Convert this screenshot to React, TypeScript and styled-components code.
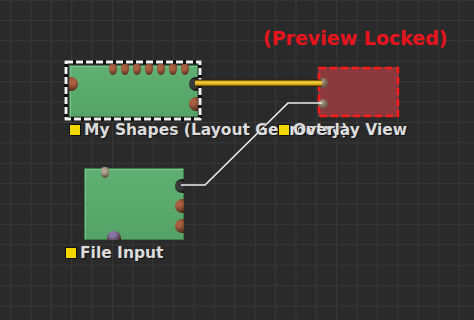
import React from "react";
import styled, { createGlobalStyle, css } from "styled-components";

const GlobalStyle = createGlobalStyle`
	html, body {
		margin: 0;
		padding: 0;
		background: #2b2b2b;
	}
`;

const Canvas = styled.div`
	position: relative;
	width: 474px;
	height: 320px;
	overflow: hidden;
	background-color: #2a2a2a;
	background-image:
		linear-gradient(to right, #383838 1px, transparent 1px),
		linear-gradient(to bottom, #383838 1px, transparent 1px);
	background-size: 20.4px 20.4px;
	background-position: 10px 20px;
	font-family: "DejaVu Sans", "Liberation Sans", sans-serif;
`;

const Wires = styled.svg`
	position: absolute;
	left: 0;
	top: 0;
	z-index: 2;
	pointer-events: none;
`;

const Node = styled.div<{ $x: number; $y: number; $w: number; $h: number; $kind: "green" | "red" }>`
	position: absolute;
	left: ${({ $x }) => $x}px;
	top: ${({ $y }) => $y}px;
	width: ${({ $w }) => $w}px;
	height: ${({ $h }) => $h}px;
	box-sizing: border-box;
	z-index: 1;
	${({ $kind }) =>
		$kind === "green"
			? css`
					background: linear-gradient(#5fb072, #55a367);
					border: 1px solid #3c7a4c;
					box-shadow: inset 1px 1px 0 #7cc48d;
			  `
			: css`
					background: #8a3a3c;
			  `}
`;

const Marquee = styled.svg`
	position: absolute;
	overflow: visible;
	pointer-events: none;
`;

type Side = "top" | "bottom" | "left" | "right";

const Port = styled.div<{ $side: Side; $at: number; $tone: string; $dark?: boolean }>`
	position: absolute;
	z-index: 3;
	box-sizing: border-box;
	background: ${({ $tone, $dark }) =>
		$dark
			? "radial-gradient(circle at 55% 50%, #3a3a3a 0 45%, #1e1e1e 70%)"
			: `radial-gradient(circle at 40% 35%, ${$tone} 0, ${$tone} 25%, #3a2016 100%)`};
	${({ $side, $at }) => {
		switch ($side) {
			case "top":
				return css`
					top: -2px;
					left: ${$at - 4}px;
					width: 8px;
					height: 11px;
					border-radius: 3px 3px 4px 4px / 3px 3px 6px 6px;
				`;
			case "bottom":
				return css`
					bottom: -1px;
					left: ${$at - 7}px;
					width: 14px;
					height: 9px;
					border-radius: 7px 7px 0 0;
				`;
			case "left":
				return css`
					left: -1px;
					top: ${$at - 7}px;
					width: 9px;
					height: 14px;
					border-radius: 0 7px 7px 0;
				`;
			case "right":
				return css`
					right: -1px;
					top: ${$at - 7}px;
					width: 9px;
					height: 14px;
					border-radius: 7px 0 0 7px;
				`;
		}
	}}
`;

const Socket = styled.div<{ $y: number }>`
	position: absolute;
	z-index: 3;
	left: 0px;
	top: ${({ $y }) => $y - 5}px;
	width: 10px;
	height: 10px;
	border-radius: 50%;
	background: radial-gradient(circle at 40% 35%, #b5a38e 0, #7f6b58 45%, #4a3a30 100%);
`;

const Label = styled.div<{ $x: number; $y: number }>`
	position: absolute;
	left: ${({ $x }) => $x}px;
	top: ${({ $y }) => $y}px;
	z-index: 4;
	display: flex;
	align-items: center;
	gap: 3px;
	white-space: nowrap;
`;

const Swatch = styled.span`
	width: 10px;
	height: 10px;
	background: #f2d800;
	border: 1px solid #111;
	flex: none;
`;

const LabelText = styled.span`
	font-weight: bold;
	font-size: 15.5px;
	line-height: 16px;
	color: #dcdcdc;
	text-shadow: 1px 1px 0 #151515;
`;

const Locked = styled.div`
	position: absolute;
	left: 263px;
	top: 27px;
	font-weight: bold;
	font-size: 19px;
	color: #e8141c;
	white-space: nowrap;
`;

const brown = "#a8603f";

const App: React.FC = () => {
	const topPorts = [0, 1, 2, 3, 4, 5, 6].map((i) => 43 + i * 12);
	return (
		<>
			<GlobalStyle />
			<Canvas>
				<Locked>(Preview Locked)</Locked>

				<Node $x={69} $y={65} $w={129} $h={52} $kind="green">
					{topPorts.map((p) => (
						<Port key={p} $side="top" $at={p} $tone={brown} />
					))}
					<Port $side="left" $at={18} $tone={brown} />
					<Port $side="right" $at={18} $tone={brown} $dark />
					<Port $side="right" $at={38} $tone={brown} />
					<Marquee width={136} height={59} style={{ left: -5, top: -5 }}>
						<rect x="1" y="1" width="134" height="57" fill="none" stroke="#111" strokeWidth="4" />
						<rect x="1" y="1" width="134" height="57" fill="none" stroke="#f2f2f2" strokeWidth="3" strokeDasharray="7 3" />
					</Marquee>
				</Node>

				<Node $x={318} $y={67} $w={81} $h={50} $kind="red">
					<Socket $y={16} />
					<Socket $y={37} />
					<Marquee width={81} height={50} style={{ left: 0, top: 0 }}>
						<rect x="1" y="1" width="79" height="48" fill="none" stroke="#ff1a1a" strokeWidth="2.5" strokeDasharray="7 4" />
					</Marquee>
				</Node>

				<Node $x={84} $y={168} $w={100} $h={72} $kind="green">
					<Port $side="top" $at={20} $tone="#b0a690" />
					<Port $side="bottom" $at={29} $tone="#8a76aa" />
					<Port $side="right" $at={17} $tone={brown} $dark />
					<Port $side="right" $at={37} $tone={brown} />
					<Port $side="right" $at={57} $tone={brown} />
				</Node>

				<Wires width={474} height={320}>
					<line x1="195" y1="83" x2="322" y2="83" stroke="#2a1e00" strokeWidth="7" />
					<line x1="195" y1="83" x2="322" y2="83" stroke="#d6a314" strokeWidth="5" />
					<line x1="195" y1="82.5" x2="322" y2="82.5" stroke="#f5d64c" strokeWidth="1.5" />
					<polyline
						points="181,185 205,185 288,103 322,103"
						fill="none"
						stroke="#ececec"
						strokeWidth="1.6"
					/>
				</Wires>

				<Label $x={69} $y={122}>
					<Swatch />
					<LabelText>My Shapes (Layout Geometry)</LabelText>
				</Label>
				<Label $x={278} $y={122}>
					<Swatch />
					<LabelText>Overlay View</LabelText>
				</Label>
				<Label $x={65} $y={245}>
					<Swatch />
					<LabelText>File Input</LabelText>
				</Label>
			</Canvas>
		</>
	);
};

export default App;
